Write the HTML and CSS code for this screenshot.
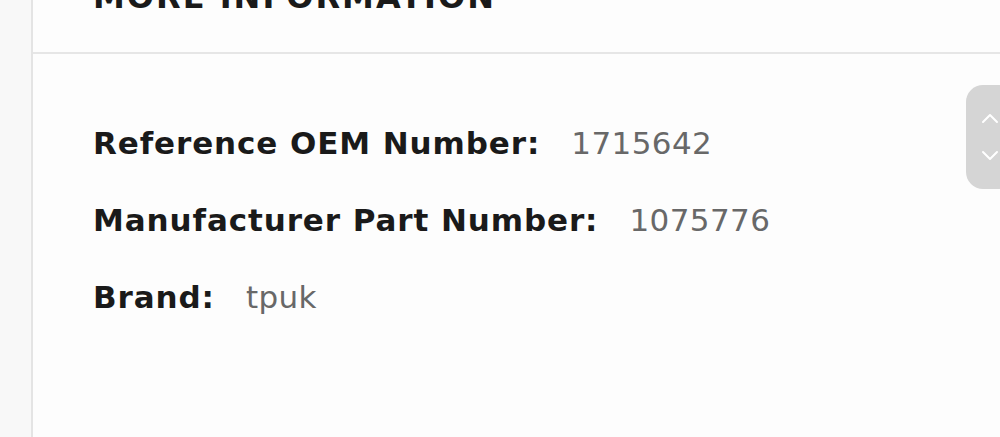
FILE: index.html
```html
<!DOCTYPE html>
<html lang="en">
<head>
    <meta charset="UTF-8">
    <meta name="viewport" content="width=device-width, initial-scale=1.0">
    <title>More Information</title>
    <link rel="stylesheet" href="styles.css">
</head>
<body>

    <div class="page">
        <div class="side"></div>
        <div class="panel">
            <div class="panel-head">
                <h2>MORE INFORMATION</h2>
            </div>
            <div class="panel-body">
                <div class="row">
                    <span class="label">Reference OEM Number:</span>
                    <span class="value">1715642</span>
                </div>
                <div class="row">
                    <span class="label">Manufacturer Part Number:</span>
                    <span class="value">1075776</span>
                </div>
                <div class="row">
                    <span class="label">Brand:</span>
                    <span class="value">tpuk</span>
                </div>
            </div>
        </div>
    </div>

    <div class="scroller">
        <svg width="20" height="14" viewBox="0 0 20 14"><path d="M3 11 L10 4 L17 11" fill="none" stroke="#fff" stroke-width="2" stroke-linecap="round" stroke-linejoin="round"/></svg>
        <svg width="20" height="14" viewBox="0 0 20 14"><path d="M3 3 L10 10 L17 3" fill="none" stroke="#fff" stroke-width="2" stroke-linecap="round" stroke-linejoin="round"/></svg>
    </div>

</body>
</html>
```

FILE: styles.css
```css
html, body {
    margin: 0;
    padding: 0;
    height: 100%;
    overflow: hidden;
    font-family: 'DejaVu Sans', sans-serif;
    background-color: #fdfdfd;
    color: #1a1a1a;
}
.page {
    display: flex;
    height: 100%;
}
.side {
    width: 31px;
    background-color: #f8f8f8;
}
.panel {
    flex: 1;
    background-color: #fdfdfd;
    border-left: 2px solid #e4e4e4;
}
.panel-head {
    height: 52px;
    border-bottom: 2px solid #e6e6e6;
    overflow: hidden;
}
.panel-head h2 {
    margin: -23px 0 0 60px;
    font-size: 32px;
    line-height: 40px;
    font-weight: 700;
    letter-spacing: 2px;
    color: #1a1a1a;
}
.panel-body {
    padding: 69px 0 0 60px;
}
.row {
    display: flex;
    gap: 31px;
    height: 77px;
    font-size: 31px;
    line-height: 40px;
}
.label {
    font-weight: 700;
    letter-spacing: 0.9px;
    color: #1a1a1a;
}
.value {
    letter-spacing: 0.4px;
    color: #686868;
}
.scroller {
    position: absolute;
    top: 85px;
    right: -16px;
    width: 50px;
    height: 104px;
    border-radius: 17px;
    background-color: #d5d5d5;
    display: flex;
    flex-direction: column;
    justify-content: center;
    gap: 24px;
    padding-left: 14px;
    box-sizing: border-box;
}
.scroller svg {
    display: block;
}
```
